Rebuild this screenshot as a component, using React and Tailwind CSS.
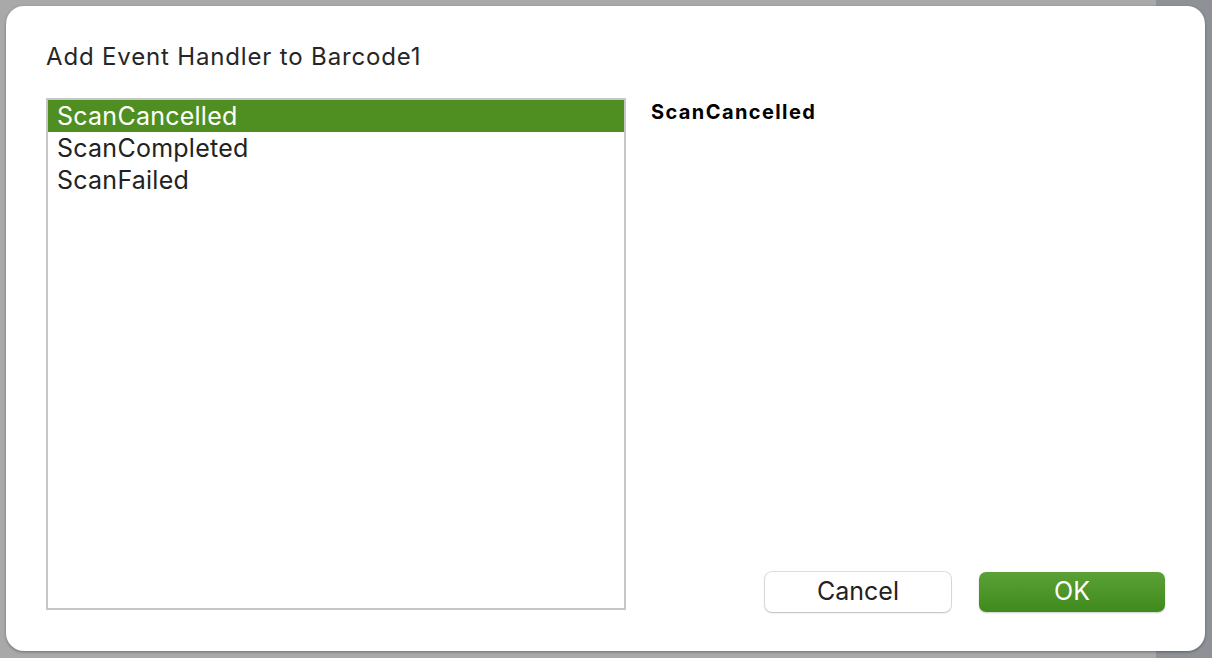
const events = ['ScanCancelled', 'ScanCompleted', 'ScanFailed'];

export default function App() {
  const selected = 'ScanCancelled';

  return (
    <div className="h-[658px] w-[1212px] bg-[linear-gradient(to_right,#a9a9a9_1156px,#8e9196_1156px)] p-[6px] pr-[7px] font-['Inter','Liberation_Sans',sans-serif]">
      <div className="flex h-[645px] flex-col rounded-[18px] bg-white px-[40px] pt-[36px] shadow-[0_1px_3px_rgba(0,0,0,0.35)]">
        <h1 className="text-[24px] leading-[30px] tracking-[0.035em] text-[#262626]">Add Event Handler to Barcode1</h1>

        <div className="mt-[26px] flex flex-1">
          <div className="h-[512px] w-[580px] border-2 border-[#c6c6c6] bg-white">
            {events.map((name) => (
              <div
                key={name}
                className={`h-[32px] pl-[9px] text-[25px] leading-[32px] tracking-[0.01em] ${
                  name === selected ? 'bg-[#4f8f22] text-white' : 'text-[#222222]'
                }`}
              >
                {name}
              </div>
            ))}
          </div>

          <div className="flex flex-1 flex-col pl-[25px]">
            <div className="pt-[2px] text-[20px] font-bold leading-[24px] tracking-[0.07em] text-black">{selected}</div>
            <div className="mt-auto mb-[39px] flex justify-end gap-[28px]">
              <button className="h-[40px] w-[186px] rounded-[7px] bg-white text-[25px] text-[#222222] shadow-[0_0_0_1px_rgba(0,0,0,0.12),0_1px_2px_rgba(0,0,0,0.15)]">
                Cancel
              </button>
              <button className="h-[40px] w-[186px] rounded-[7px] bg-[linear-gradient(to_bottom,#5ba136,#3f8a1d)] text-[25px] text-white shadow-[0_1px_2px_rgba(0,0,0,0.2)]">
                OK
              </button>
            </div>
          </div>
        </div>
      </div>
    </div>
  );
}
